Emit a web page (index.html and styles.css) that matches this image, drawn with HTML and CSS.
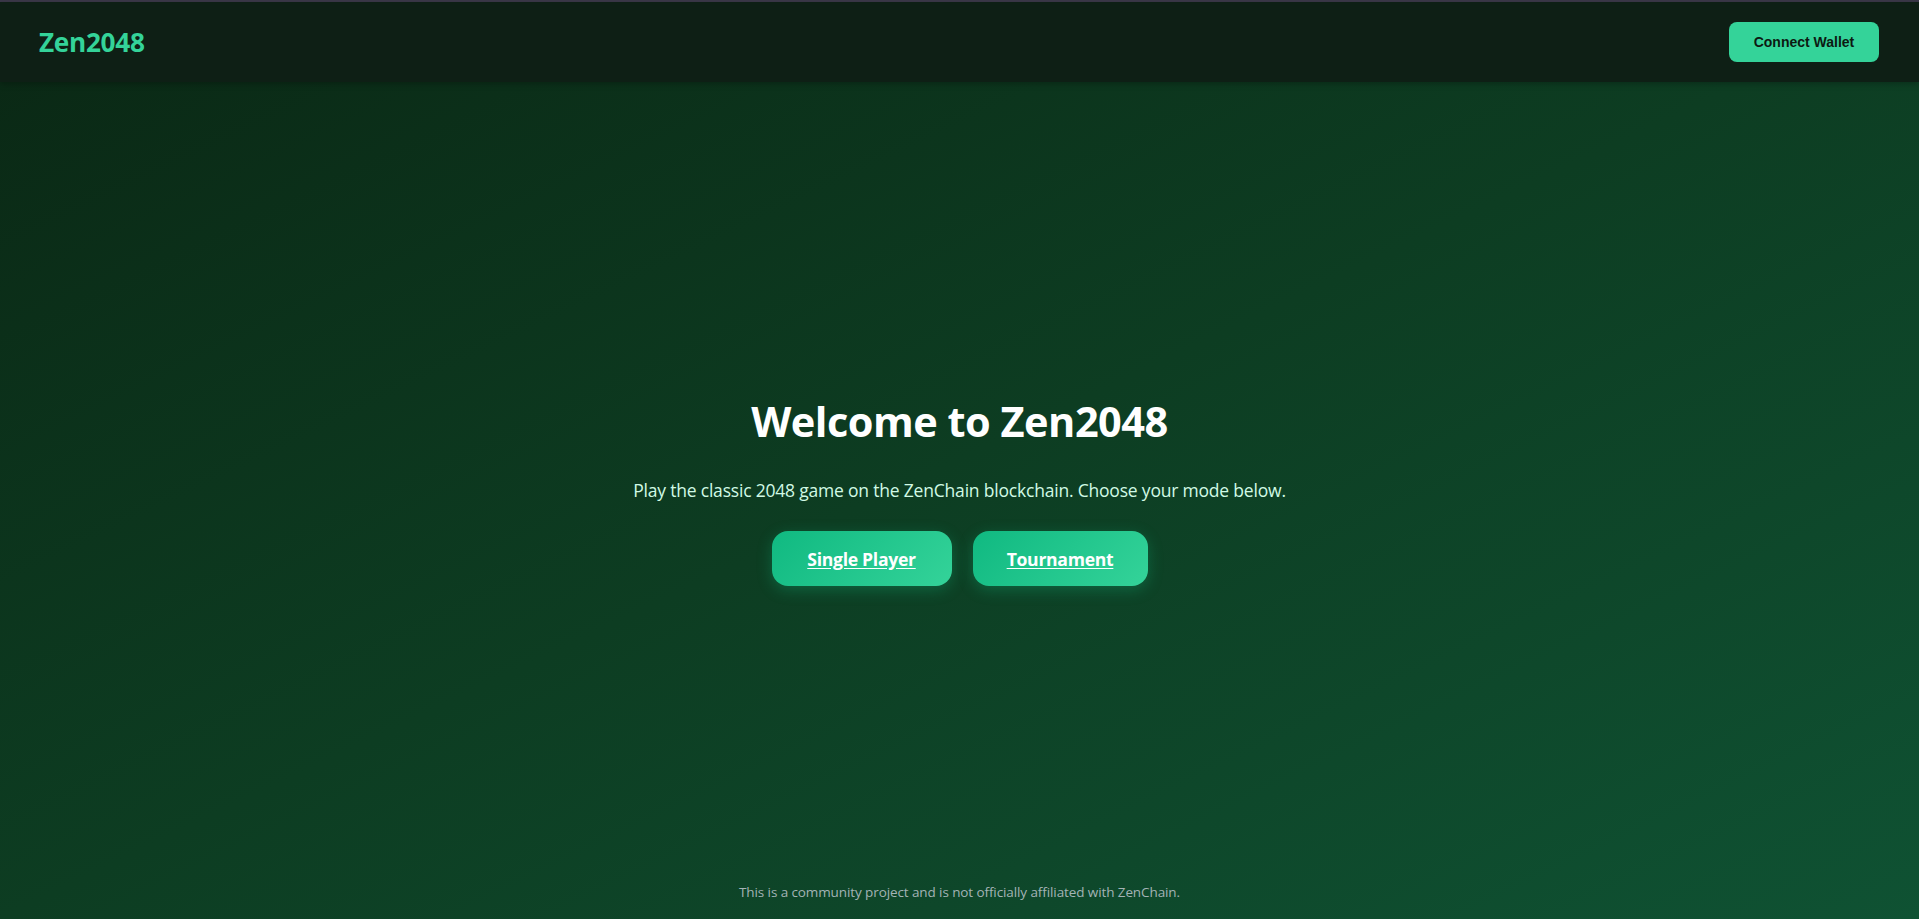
FILE: index.html
```html
<!DOCTYPE html>
<html lang="en">
<head>
<meta charset="utf-8">
<title>Zen2048</title>
<link rel="stylesheet" href="styles.css">
</head>
<body>
<div class="page">
  <header class="topbar">
    <div class="logo">Zen2048</div>
    <button class="wallet-btn">Connect Wallet</button>
  </header>
  <main class="hero">
    <h1 class="hero-title">Welcome to Zen2048</h1>
    <p class="hero-sub">Play the classic 2048 game on the ZenChain blockchain. Choose your mode below.</p>
    <div class="modes">
      <a class="mode-btn mode-single" href="#">Single Player</a>
      <a class="mode-btn mode-tour" href="#">Tournament</a>
    </div>
  </main>
  <footer class="foot">This is a community project and is not officially affiliated with ZenChain.</footer>
</div>
</body>
</html>
```
FILE: styles.css
```css
* { box-sizing: border-box; }
html, body { margin: 0; padding: 0; height: 100%; }
body {
  font-family: "Open Sans", "Noto Sans", sans-serif;
  background: linear-gradient(to bottom right, #0a2714 0%, #0d3d22 50%, #0f5233 100%);
  color: #fff;
  overflow: hidden;
}
.page {
  height: 919px;
  display: flex;
  flex-direction: column;
  border-top: 2px solid #3b3849;
}
.topbar {
  height: 80px;
  flex: none;
  display: flex;
  align-items: center;
  justify-content: space-between;
  padding: 0 40px 0 39px;
  background: #0e1f15;
  box-shadow: 0 2px 6px rgba(0,0,0,0.25);
}
.logo {
  font-family: "Open Sans", sans-serif;
  font-weight: 700;
  font-size: 26.2px;
  color: #34d399;
  letter-spacing: -0.3px;
}
.wallet-btn {
  font-family: "Liberation Sans", Arial, sans-serif;
  font-weight: 700;
  font-size: 14px;
  color: #0c1a12;
  background: #34d399;
  border: none;
  border-radius: 8px;
  width: 150px;
  height: 40px;
  padding: 0;
}
.hero {
  flex: 1;
  display: flex;
  flex-direction: column;
  align-items: center;
  justify-content: center;
  padding-top: 17px;
}
.hero-title {
  margin: 0;
  font-size: 41.5px;
  font-weight: 700;
  line-height: 50px;
  letter-spacing: -0.5px;
}
.hero-sub {
  margin: 32px 0 0;
  font-size: 17.5px;
  line-height: 24px;
  color: #d1fae5;
  letter-spacing: -0.2px;
}
.modes {
  display: flex;
  gap: 21px;
  margin-top: 29px;
}
.mode-btn {
  display: flex;
  align-items: center;
  justify-content: center;
  height: 55px;
  border-radius: 16px;
  background: linear-gradient(135deg, #10b981 0%, #34d399 100%);
  color: #fff;
  font-weight: 700;
  font-size: 17.6px;
  letter-spacing: -0.3px;
  text-decoration: underline;
  text-underline-offset: 2px;
  box-shadow: 0 4px 15px rgba(16,185,129,0.3);
}
.mode-single { width: 180px; }
.mode-tour { width: 175px; }
.foot {
  flex: none;
  height: 36px;
  text-align: center;
  font-size: 13.5px;
  line-height: 18px;
  color: #a3b3b5;
  letter-spacing: -0.1px;
}
```
